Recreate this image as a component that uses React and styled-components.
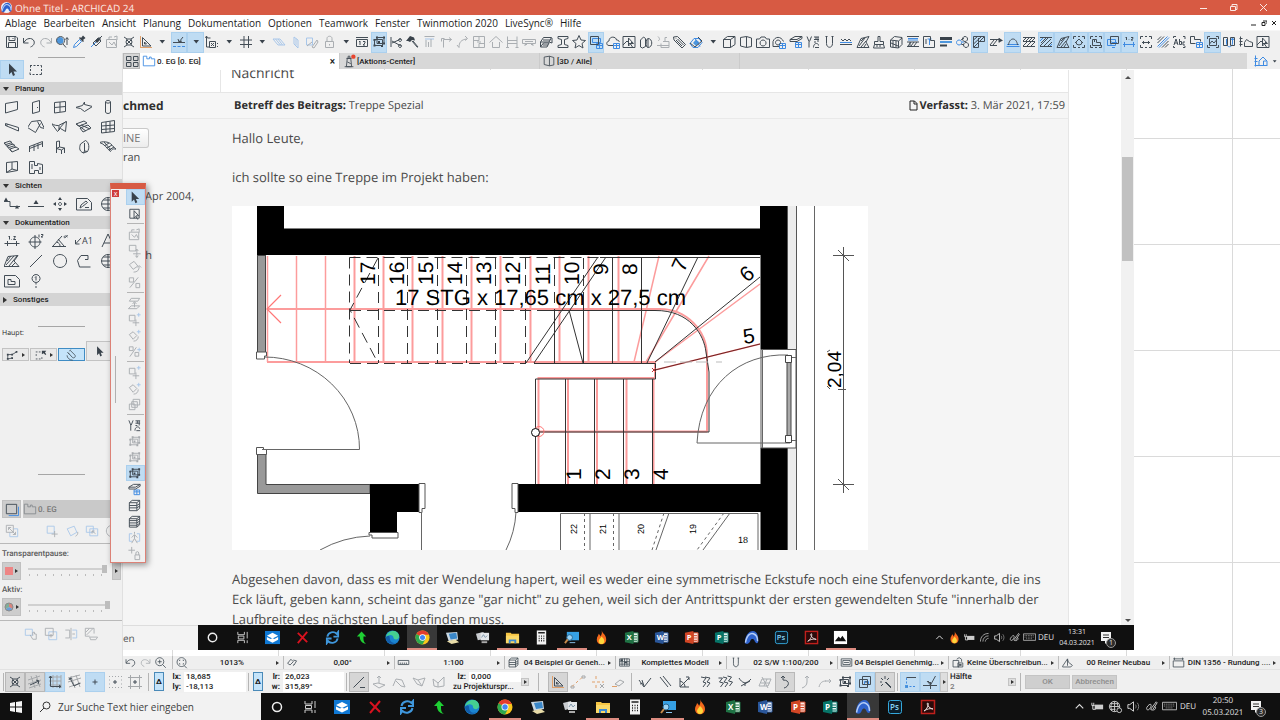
import React from 'react';
import styled, { createGlobalStyle, css } from 'styled-components';

const GlobalStyle = createGlobalStyle`
  * { box-sizing: border-box; }
  html, body, #root { height: 100%; margin: 0; }
  body {
    font-family: 'Open Sans', 'Noto Sans', sans-serif;
    font-size: 9px;
    color: #1c1c1c;
    background: #f0f0f0;
    overflow: hidden;
    text-rendering: geometricPrecision;
  }
  button, input {
    font: inherit;
    color: inherit;
    border: 0;
    padding: 0;
    margin: 0;
    background: none;
    min-width: 0;
  }
`;

// small print of the bars and palettes
const tinyFont = css`
  font-family: Roboto, 'Noto Sans', sans-serif;
  font-size: 8px;
  font-weight: 500;
`;

/* ---------- icons ---------- */
// k = dark stroke, f = dark fill, b = blue stroke, bf = blue fill,
// o = orange stroke, g = grey stroke
const ICONS = {
  save: { k: 'M2.5 2.5h9.5l1.5 1.5v9.5h-11zM5 2.5v4h6v-4M4.5 13.5v-5h7v5M9 4v1' },
  undo: { k: 'M2.5 4v5h5M3 8.5C5 4 11 3 13 7c1 3-1 5-3.500 6' },
  redo: { k: 'M13.500 4v5h-5M13 8.500C11 4 5 3 3 7c-1 3 1 5 3.500 6' },
  pick: { bf: 'M6 3a3.500 3.500 0 1 0 .1 0z', k: 'M6.500 2.500a4 4 0 1 0 .1 0zM9 10l3 3.500M13 4v7M11.500 5.500l1.500-2 1.500 2' },
  pipette: { b: 'M2.500 13.500l1-3 5-5 2 2-5 5z', f: 'M8 4l1-1 1 1 2-2.500 2.500 2.500-2.500 2 1 1-1 1z' },
  syringe: { b: 'M3 13l7-7', k: 'M5 9l3 3 5-5-3-3zM11 5l3-3', f: 'M7 7l2 2 4-4-2-2z' },
  suspend: { k: 'M2.500 5.500v8h10v-8zM5 5V3h3M10 3l3-1v4M5 8l3 3 2-3 2 4' },
  cross: { k: 'M3 3l3 2h4l3-2M3 13l3-2h4l3 2M6 5l-1 3 1 3M10 5l1 3-1 3M6 6l4 4M10 6l-4 4' },
  square: { o: 'M2.500 2v12M2 13.500h12', k: 'M4.500 3.500v8.500h8.500zM6.500 8v2h2z' },
  caret: { f: 'M5.500 6h5.500l-2.700 3.500z' },
  guide: { b: 'M2 12.500h3M6.500 12.500h3M11 12.500h3', k: 'M2 8.500h12M8 8l4-5M7 5l1 3 3-1' },
  xy: { k: 'M2.500 2v11h3M1.500 4l1-2 1 2h3M5.500 7.500h6v6h-6zM7 9l3 3M10 9l-3 3M13.500 9v1M13.500 12v1' },
  hash: { k: 'M6 2v12M10.500 2v12M2 6h12M2 10.500h12' },
  planeA: { b: 'M2 5h7l5 6h-7zM4.500 5l5 6M7 5l4.500 6' },
  planeB: { b: 'M6 3l4 3v8l-4-4zM8 4.500v7' },
  planeC: { b: 'M2.500 4h6v7h-6z', k: 'M8 13l5-7 1 2-4 6zM3 12l5-4' },
  lock: { k: 'M4.500 7.500h8v6h-8zM6 7.500v-3c0-3 5-3 5 0v3M8.500 10v1.500' },
  ruler12: { k: 'M2 3.500h12M2.500 5.500h11v7h-11zM6 7v4M5 8l1-1M9 7.500h2v1.500l-2 2h2' },
  group: { k: 'M3.500 5.500h8v6h-8zM6 3.500h7v6h-7z', f: 'M2.500 10.500h2v2h-2zM5 2.500h2v2h-2zM12 2.500h2v2h-2zM12 8.500h2v2h-2zM7 7h2v2h-2zM2.500 5h2v2h-2zM10 11h2v2h-2z' },
  scissors: { k: 'M3 3v10M4 9l9-4M4 7l9 5M12 4.500a1.500 1.500 0 1 0 .1 0zM12 10.500a1.500 1.500 0 1 0 .1 0z' },
  axe: { k: 'M8 7l5.500 6.500M9 7l5 6', f: 'M2 7l4-5 4 1.500 1 3-3-.5-2 2-2-1z' },
  steps: { b: 'M4 5h9', k: 'M3.500 2.500h10M10 5v8M5 6v7M7.500 8v5' },
  corner: { k: 'M5.500 13.500v-8h8M3.500 7.500v-3h3M11 3.500l2.500 2-2.500 2' },
  bend: { k: 'M5 13.500c0-5 2-8 8-8.500M3 11l2 2.500M11 2l2.500 2.500-2.500 2' },
  split: { k: 'M2.500 2.500h11v11h-11zM8 2.500v4H2.500M8 13.500v-4h5.500M6 8h4' },
  house: { k: 'M1.500 8.500L8 2.500l6.500 6M4.500 8v5.500h7V8' },
  beam: { k: 'M3.500 2.500v11M13 2.500v11M3.500 6.500H13M3.500 9.500H13M2 13.500h3M11.500 13.500h3' },
  truck: { k: 'M1.500 5.500h13v4h-13zM4 12v-1.500h2M12 12v-1.500h-2M4 7.500h8' },
  slabs: { k: 'M2.500 8l3-4.500h8L11 8zM2.500 13l3-4H11L9 13zM2.500 8v5M11 8l3 1v-5M5 6h7M5 11h5' },
  ibeam: { k: 'M3 2.500h10v2l-3.500 1v5l3.500 1v2H3v-2l3.500-1v-5L3 4.500z' },
  star: { k: 'M8 1.500l2 4.500 4.500.5-3.500 3 1 4.500-4-2.500-4 2.500 1-4.500-3.500-3L6 6z' },
  layerSet: { k: 'M2.500 2.500h8v8h-8z', b: 'M4.500 4.500h8v4h-8zM8.500 9.500h6v5h-6zM8.500 11.500h6M11.500 9.500v5' },
  cloudSet: { k: 'M8 11.500H4c-3 0-3-4 0-4.500 0-5 7-5 7.500-1 2 0 3 1 2.500 2', b: 'M8.500 9.500h6v5h-6zM8.500 11.500h6M11.500 9.500v5' },
  picSel: { k: 'M2 2.500h12v11H2zM2 11l4-4 3 3 2-2M7.500 4v8l2-2 2 3M7.500 4l5 5.500h-3' },
  solids: { k: 'M2.500 6l3-3 2 1.500v8l-3 1.500-2-1zM10 4.500c5 0 5 9 0 9-3 0-2-9 0-9zM10 5v8' },
  paint: { k: 'M8 7.500h6v6H6v-4M10 7V3.500h2M3 2.500c2 2 2 4 0 4M2 11.500h12' },
  tag: { k: 'M2.500 3l4-.5 8 8-3.500 3.500-8-8zM5 6l6 6M6.500 5l6 6M5 4.500v.5' },
  eye3d: { b: 'M2 9.500l4-5h5l3 4-4 5H5zM7 4.500l5 8', k: 'M2 9l5 4 7-6M10 3l4 4', bf: 'M8 5.500l3.500 3L8 12l-3-3z' },
  box: { k: 'M2.500 5.500h7v8h-7zM2.500 5.500l4-3h7.500l-4.500 3M14 2.500v8l-4.500 3' },
  box2: { k: 'M2.500 3.500l6-1v11l-6-1.500zM8.500 2.500l5 1.500v8.500l-5 1' },
  camera: { k: 'M1.500 5h3l1.500-2h4l1.500 2h3v8.500h-13zM8 6a3 3 0 1 0 .1 0z' },
  camSet: { k: 'M8 12.500H2v-5C4 2 10 2 12.500 7.500M7 6a2.500 2.500 0 1 0 .1 0z', b: 'M8.500 9.500h6v5h-6zM8.500 11.500h6M11.500 9.500v5' },
  laySet: { k: 'M2 5.500l5-3h7l-5 3zM2 5.500v2h7l5-3v-2', b: 'M7.500 8.500h6v5h-6zM7.500 10.500h6M10.500 8.500v5' },
  penSet: { k: 'M2 2.500l2 5v6M6.500 2.500l-2 5M9 3h5M9 5.500h5M9 8h2M8.500 13.500c0-5 5-5 5-2M10 13.500h4M11 3v3M13 3v5' },
  pen: { k: 'M5.500 2.500v7c0 5 6 5 6 0v-7M4.500 2.500h2M10.500 2.500h2' },
  waves: { k: 'M2 10.500h12M3 5l2 2 2-2 2 2 2-2 2 2', b: 'M2 8.500h12' },
  hatch: { k: 'M2 13.500l4-9 8-2-3 5.500 3 5.500zM4 12l6-8M6 13l5-6M9 13l2-3M6 7l3-3' },
  brush: { k: 'M7 2.500h2v5h3.500v3h-9v-3H7zM3.500 10.500l-1 3.500h11l-1-3.500M6 11v2M9 11v2' },
  cube: { k: 'M2.500 6l4-3.500 7.500 1v7l-3.500 3.500-8-1zM2.500 6l8 1 3.500-3M10.500 7v7M5 6.500v7M8 7v6.500M3 9l7 3' },
  wallHatch: { b: 'M3 4.500h10M3 6h10', k: 'M2 2.500h12M2 8h12M2 12.500h12M3 12l3-4M6 12l3-4M9 12l3-4M5 8v5' },
  planT: { k: 'M2.500 2.500h7v4h4v7h-11zM5 5v5', b: 'M6.500 5h4M8.500 5v6' },
  blocks: { f: 'M2 3h12v3H2zM2 10.500h7v2H2z', bf: 'M2 7h12v2H2z' },
  circles: { b: 'M4 6a2.500 2.500 0 1 0 .1 0zM7 8h2', k: 'M10 2.500a2.500 2.500 0 1 0 .1 0zM11 8.500a2.500 2.500 0 1 0 .1 0zM6 6l3-2M6 10l3 1' },
  hatchCorner: { k: 'M2.500 2.500h11v5h-6v6h-5zM2.500 6l4-3.500M2.500 10l8-7.500M3 13l10-10M7.500 4v4' },
  hatchArrow: { k: 'M2 5.500h9M2 11.500h7M2 11l4-5M5 11l4-5M11 8.500V4', f: 'M11 4l4 2.500-4 2z' },
  roof: { b: 'M1.500 12.500h13M2 10.500h12', k: 'M3.500 11c1-8 8-8 9 0' },
  wall: { k: 'M2 3.500h12M2 7.500h12M2 12.500h12M2 7l3-3M5 7l3-3M8 7l3-3M11 7l3-3M2 12l4-4M6 12l4-4M10 12l4-4' },
  wallBlue: { k: 'M2 3.500h12M2 12.500h12M3 9l5-5M2 12l8-8M6 12l7-7M10 12l4-4', b: 'M2 7l3-3M12 12l2-2' },
  frameCircle: { k: 'M2.500 5V2.500H5M11 2.500h2.500V5M13.500 11v2.500H11M5 13.500H2.500V11M7 2.500h2M7 13.500h2M4 9l4-4 4 4M5 8a3 3 0 1 0 6 0' },
  frameBox: { k: 'M2.500 5V2.500H5M11 2.500h2.500V5M13.500 11v2.500H11M5 13.500H2.500V11M7 2.500h2M7 13.500h2M4.500 11.500v-6h4v3h4v3zM6.500 6v2' },
  overlap: { k: 'M5.500 2.500h8v7h-8z', b: 'M2.500 5.500h8v6h-8zM7 8.500h5M7 13.500h3M6 7v4' },
  dims: { b: 'M2 10.500h12M3.500 8v5M12.500 8v5', k: 'M5.500 3v3M4.500 4l1-1M8 5.500v.5M10 3.500h2v1l-2 1.500h2' },
  frameDim: { k: 'M2.500 5V2.500H5M11 2.500h2.500V5M13.500 11v2.500H11M5 13.500H2.500V11M7 2.500h2M7 13.500h2M4 8.500h8M5.500 7v3M10.500 7v3' },
  hatchBlue: { k: 'M2.500 6l3.500-3.500M2.500 9l6.500-6.500M7 13.500l6.500-6.500M10 13.500l3.500-3.500', b: 'M2.500 12.500l10-10M4 13.500l10-10' },
  abc: { k: 'M2.500 4V2.500H5M12 2.500h2V5M14 12v1.500h-2M4 13.500H2.500V12M3 11l2-6 2 6M3.500 9h3M8.500 5v5.500h2v-3h-2M14 8h-2v3h2' },
  planSet: { k: 'M2.500 2.500h4v3h6v2M2.500 2.500v7h5', b: 'M8.500 8.500h6v5h-6zM8.500 10.500h6M11.500 8.500v5' },
  framePic: { k: 'M2.500 5V2.500H5M11 2.500h2.500V5M13.500 11v2.500H11M5 13.500H2.500V11M4.500 4.500h7v7h-7zM4.500 10l2.500-3 2 2 2.500-3' },
  magnetU: { k: 'M2.500 3.500h4v8h-4zM9.500 3.500h4v8h-4z', b: 'M5.500 5v4c0 5 6 5 6 0V4M10 6l1.500-2 1.500 2' },
  elev: { k: 'M2.500 2.500v10M1.500 4.500h3M1.500 7.500h3M1.500 10.500h3M6.500 12.500v-4l2-3 3 2 3 1v4z' },
  elevBlue: { b: 'M2.500 2.500v11M1.500 5.500h3M1.500 8.500h3M1.500 12.500h13M6 12V8l4-4 4 4v4M10.500 12V8h3' },

  /* toolbox */
  arrow: { f: 'M5 1.500v11l2.500-2.500 1.500 4 2-1-1.500-3.500h3.500z' },
  marquee: { k: 'M2 3.500h2M5.500 3.500h2M9 3.500h2M12.500 3.500h1v2M13.500 7v2M13.500 10.500v2h-2M10 12.500H8M6.500 12.500h-2M3 12.500h-1v-2M2.500 9V7M2.500 5.500V4' },
  tWall: { k: 'M1.500 4.500l12-2v8l-12 3.500z' },
  tDoor: { k: 'M4.500 3.500l7-2v11l-7 2zM9.500 8v1' },
  tWindow: { k: 'M2.500 3.500l11-1v10l-11 1.500zM8 3v10M2.500 8.500l11-1' },
  tSlab: { k: 'M-0.500 8.500l7-2 2-3.500v2.500l8 2-8 5-4-3z' },
  tColumn: { k: 'M5.500 3c0-2 5-2 5 0v10c0 2-5 2-5 0zM5.500 3c0 1.500 5 1.500 5 0' },
  tBeam: { k: 'M1.500 4.500l13 4v3.500l-13-5.500zM1.500 6.500l3-1' },
  tRoof: { k: 'M-0.500 8.500l4-6 9-1 4 8-4-1-3-6M-0.500 8.500l8 5 5-9' },
  tShell: { k: 'M-0.500 4.500c3 2 5 2 7 2l8-4-1 10-5-3-3 3zM7 6.500v4M13.500 2.500l-7 8' },
  tSky: { k: 'M0 5l8-3 3 2-8 3zM4 9l8-3 3 3-8 4zM0 5l10 7M5 6l9 4' },
  tCurtain: { k: 'M1.500 3.500l13-2v11l-13 1.500zM6 3v10.500M10 2.500v10.500M1.500 7l13-1M1.500 10.500l13-1' },
  tStair: { k: 'M0 4l6-2 2 1.500-6 2zM3 7l6-2 2 1.500-6 2zM6 10l6-2 3 2-7 3zM0 4l8 9M8 4v2M11 7v2' },
  tRail: { k: 'M1.500 7.500l13-5M1.500 9.500l13-5M1.500 7v6M6 6v6M10 4.500V10M14.500 2.500V8' },
  tChair: { k: 'M4.500 2.500l3-.5v6l5 1v5M4.500 2.500V14M4.500 9.500l5 1.500 3-2M9.500 11v4M7.500 8l-3 1.500' },
  tMorph: { k: 'M4.500 5l5-3.500c4 2 4 8 2 11l-4 1.500c-5-2-4-6-3-9zM8.500 4v8l3 .5M8.500 12l-1 2' },
  tMesh: { k: 'M-0.500 3.500c3-1 5-1 9 0 3 1 4 4 8 7-3-1-4-1-6 2C6 9 5 5-.5 3.500zM4 3l7 8M9 4L5 6.500M12 6L7 9M14 8l-5 3' },
  tZone: { k: 'M2.500 3.500l11-1v9l-11 2zM8 3v7l5.500 1.500M8 10l-5.500 3.500' },
  tZone2: { k: 'M1.500 2.500h5v4h3v-2l5 1v9h-4v-3h-4v3h-5zM4 5v5M12 8v3' },
  tSection: { k: 'M0 5.500h6v5h10', f: 'M0 5l2-3.500L4 5zM11 12.500L13 9l2 3.500z' },
  tElev: { k: 'M0 10.500h16', f: 'M5.500 8L8 4l2.500 4z' },
  tInt: { k: 'M8 6.500a1.500 1.500 0 1 0 .1 0z', f: 'M6 4l2-3 2 3zM6 12l2 3 2-3zM4 6L1 8l3 2zM12 6l3 2-3 2z' },
  tSheet: { k: 'M0.500 2.500h11l4 4v7.500h-15zM4 12l1-3 5-4 1.500 1.500-5 4zM9 11.500h4' },
  tGlobe: { k: 'M8 1.500a6.500 6.500 0 1 0 .1 0zM8 1.500v13M1.500 8h13M3 4h10M3 12h10' },
  tDim: { k: 'M0.500 10.500h15M3.500 8v5M12.500 8v5M5.500 3v3.500M4.500 4l1-1M7.500 6v.5M9.500 3.500h2l-2 3h2.500' },
  tLevel: { k: 'M7 4a5 5 0 1 0 .1 0zM7 2v14M0.500 9h13M11 1.500v3M13 1.500h2v1l-2 1.500h2' },
  tAngle: { k: 'M0 13.500h14M1 13L10 3M4.500 9c3 1 3.500 2.500 3.500 4M6 6l6 7M15.500 2c-4 7-5-2 0 2' },
  tText: { k: 'M2 14L8 1l6 13M4 10h8' },
  tFill: { k: 'M0 13.500l4-10 10-1-4 5.500 5 5.500zM2 12l8-9M5 13l8-10M8 13l3-3M3 8l4-5' },
  tLine: { k: 'M2 14L14 2' },
  tCircle: { k: 'M8 1.500a6.500 6.500 0 1 0 .1 0z' },
  tPoly: { k: 'M12 2.500H5l-3.500 5 2 6.500h11M12 2.500v4H9' },
  tDrawing: { k: 'M0.500 2.500h11l4 4v7.500h-15zM4 11.500v-5h3v2h4v3z' },
  tChange: { k: 'M8 1.500a4 4 0 1 0 .1 0zM8 3.500v4M7 4.500l1-1M8 10v1.500M8 13v2' },

  /* palette and navigator */
  polySel: { k: 'M3 3.500h10v9.500H3zM7.500 5v8l2-2 2 3.500M7.500 5l5 5.500h-3' },
  move: { k: 'M2.500 2.500h7v6h-7zM10.500 7v8M6.500 11.500h8M9 8.500l1.500-2 1.500 2M9 13.500l1.500 2 1.500-2' },
  rotate: { k: 'M2.500 6l5-3.500 4 5-5 3.500zM7 14c4 0 6-2 6-6M13 7l-2 2M13 7l2 2' },
  mirror: { k: 'M2.500 3h4.500v4.500H2.500zM3 13.500l9-11M9.500 9h4v4.500h-4z' },
  elevate: { k: 'M4.500 2.500h9l-2 3h-9zM1.500 13.500h9l3-3h-9zM8 12V7M6 8.500L8 6l2 2.500' },
  moveCopy: { k: 'M2.500 3.500h6v6h-6zM9.500 8v7M6 11.500h7', b: 'M12.500 1v4M10.500 3h4' },
  rotateCopy: { k: 'M2.500 7l4-3 4 4-4 4zM7 14c3 0 5-2 5-5', b: 'M12.500 2v4M10.500 4h4' },
  mirrorCopy: { k: 'M2.500 3h4v4h-4zM3 13.500l7-10M8.500 9h4v4h-4z', b: 'M13 4v4M11 6h4' },
  multi: { k: 'M6.500 2.500h7v6h-7zM2.500 7.500h6v6h-6zM5 5h6v6h-6z' },
  layers: { k: 'M2.500 5l3-2.500h8l-3 2.500zM2.500 5v8.500h8V5M2.500 8h8l3-2M2.500 10.500h8l3-2M10.500 13.500l3-2.500V2.500' },
  layersDark: { k: 'M2.500 5l3-2.500h8l-3 2.500zM2.500 5v9h8V5M2.500 7h8l3-2M2.500 9.500h8l3-2M2.500 12h8l3-2M13.500 2.500v9l-3 2.500' },
  person: { b: 'M2.500 4h3M10.500 4h3v8h-3M5.500 12h-3V4', k: 'M8 2v2M8 5v4l-3 5M8 9l3 5M5 8l3-3 3 3' },
  wandLock: { k: 'M5 1v7M1.500 4.500h7M8.500 9.500h5v5h-5zM9.500 9.500V7.500c0-2 3-2 3 0v2' },
  folder: { k: 'M1.500 13.500v-11h4v3h3v-2h2v2h4v8z' },
  folderBlue: { b: 'M1.500 13.500v-11h4v3h3v-2h2v2h4v8z' },
  views: { k: 'M2.500 2.500h11v10h-11z', b: 'M5 14.500h10.500V5' },
  swap: { k: 'M1.500 1.500h8v8h-8zM4 4l8 8M4 7V4h3M12 9v3H9', b: 'M10 5.500h4.500v9h-9V10' },
  nMove: { b: 'M2.500 2.500h8v8h-8z', k: 'M11 8v7M7.500 11.500h7' },
  nRotate: { b: 'M2.500 5.500l8-3 3 7-7 4z', k: 'M12 14c2-1 3-3 2.500-5' },
  nCopy: { b: 'M1.500 2.500h8v7h-8zM5.500 5.500h9v8h-9z', k: 'M8 8l4 3M8 11V8h3' },
  nHand: { b: 'M1.500 2.500h8v7h-8z', k: 'M7 9l3 5h4V8h-2V6h-2v4' },
  nOver: { b: 'M5.500 5.500h9v9h-9z', k: 'M1.500 1.500h9v8h-9zM8 8v4M6 10h4' },
  nMirror: { k: 'M1.500 3.500h5v9h-5M8 1v14M9.500 8h3', b: 'M9.500 3.500h5v9h-5' },
  nHatch: { k: 'M1.500 1.500h10v6M1.500 1.500v9h5M3 9l7-7M2 6l4-4M6.500 11.500h9l-2 3h-6z' },
  magnet: { k: 'M4 6l5 5.500c2 2 5-1 3-3L6.500 3M3 5l2.500 3M7 2L5.500 4M2.500 9c0 3 3 6 7 6' },
  polyline: { k: 'M2 12.500V7.500h5l5-3M2 12.500l5-1', f: 'M1 6.500h2v2H1zM6 6.500h2v2H6zM11 3.500h2v2h-2zM1 11.500h2v2H1zM6 10.500h2v2H6z' },
  marqueeArrow: { k: 'M2 4.500h2M5.500 4.500h2M2.500 7v2M2 12.500h2M5.500 12.500h2M9 12.500v-2', f: 'M9 3h5l-1.500 2 1.500 2-1 1-2-2-2 1z' },
  overview: { k: 'M2.500 3.500h4.500v4H2.500zM9.500 3.500h4.500v4H9.500zM2.500 9.500h4.500v4H2.500zM9.500 9.500h4.500v4H9.500z' },

  /* option and coordinate bars */
  zoomIn: { k: 'M7 2a5 5 0 1 0 .1 0zM11 11l3.500 3.500M7 4.500v5M4.500 7h5' },
  zoomFit: { k: 'M8 2a5.500 5.500 0 1 0 .1 0zM11.500 12l3 3M5.500 6V5h1M9.500 5h1v1M5.500 9v1h1M10.500 9v1h-1' },
  orient: { k: 'M2 9l4-5 3 3-4 4zM9 5l4 1-3 5M9 12l1-2' },
  scale: { k: 'M1.500 5.500h13v5h-13zM4 8v2M6.500 8v2M9 8v2M11.500 8v2' },
  model: { k: 'M2 3.500h12v9H2zM2 7h12M2 10h12M5 3v9M8 3v9M11 3v9', f: 'M3 4h3v2H3zM8 7h3v2H8z' },
  monitor: { k: 'M1.500 3.500h13v9h-13zM3.500 5.500h9v5h-9zM5 8h6' },
  override: { k: 'M2.500 5.500h7v8h-7zM7 4l3-2 3 2v3M8.500 8.500h6v5h-6z', f: 'M10 10h3v2h-3z' },
  reno: { k: 'M2 12.500l6-9 1 4 5 4-2 2H2zM8 4v8' },
  dimStd: { k: 'M1.500 3.500h13M1.500 6v7.500h13V6zM3 2v3M13 2v3' },
  gridSkew: { g: 'M1 6l12-4M1 10l13-4M2 14l12-4M4 2l4 12M9 1l4 12', k: 'M3 11l9-4M9 6l3 1-1 3' },
  gridAxis: { g: 'M2 3h12M2 7h12M2 11h12M6 1v13M10 1v13M14 1v13', k: 'M3.500 2v10.500H14M2 4l1.500-2L5 4M12 11l2 1.500-2 1.500' },
  gridTurn: { g: 'M1 4l12-3M1 8l13-4M2 13l12-4M4 2l4 12M9 1l4 12', k: 'M3 4l4 8 6-3M2 6l1-2 2 1' },
  snapPoint: { k: 'M8 5.500v5M5.500 8h5' },
  gridDots: { g: 'M2 2.500h1M5 2.500h1M8 2.500h1M11 2.500h1M14 2.500h1M2 6h1M14 6h1M2 10h1M14 10h1M2 13.500h1M5 13.500h1M8 13.500h1M11 13.500h1M14 13.500h1', k: 'M8 6v4M6 8h4' },
  gridLines: { g: 'M3.500 1v14M12.500 1v14M1 3.500h14M1 12.500h14', k: 'M8 6v4M6 8h4' },
  slope: { k: 'M2.500 13.500L13 3M9 13.500h5' },
  surf: { k: 'M2 10l5-1 7 2-6 3zM8 9V2M6 4l2-2 2 2' },
  surf2: { k: 'M2 12l3-7 6 1 3 7-4-1-5-5' },
  surf3: { k: 'M2 4l5 2 7-2-3 8-5-2zM7 6l4 6' },
  surf4: { k: 'M2 5l5 4 6-6v9l-6 1-4-1zM7 9v4' },
  dashLine: { o: 'M2 12.500l2-2M6 9l2-2M10 5.500l2-2', g: 'M1 12h3v2H1zM12 2h3v2h-3z' },
  dashCross: { o: 'M2 8h3M7 8h3M12 8h2M6 2v3M6 11v3', g: 'M10 10l4 4M14 10l-4 4' },
  eraser: { o: 'M2 12.500h5', g: 'M5 10l5-4 4 2-5 4z' },
  perp: { k: 'M2 6l5 7M7 13l7-9M3 10l3-1M5 6l2 6' },
  parallel: { k: 'M3 3l8 10M6 2l8 10' },
  bisect: { k: 'M3 13V4M3 13h9M3 13l9-9M3 7c3 1 5 3 5 6M9 3h3v3' },
  offset: { k: 'M4 3l5 1-3 4 3 1-3 4M8 3l5 1-3 4 3 1-3 4' },
  offset2: { k: 'M1.500 4h4l-3 4 4 1-3 4M6 3l4 1-3 4 4 1-3 4M10.500 2l4 1-3 4 4 1-3 4' },
  tangent: { k: 'M2 4c3 5 7 7 12 1M4 12l9-5M8 9v3' },
  gridPlane: { k: 'M2 12l3-7h9l-3 7zM4 9h9M7 12l3-7M5 3l6 11' },
  curveL: { k: 'M6 2v4c8 0 6 7 1 8M4 4l2-2 2 2' },
  curveR: { k: 'M10 2v6c0 3-2 5-5 6M8 4l2-2 2 2' },
  arcR: { k: 'M2 13c1-4 3-6 7-6M8 7h6M12 5l2 2-2 2' },
  overlap2: { k: 'M5.500 2.500h8v8h-8zM2.500 5.500h8v8h-8zM8 8h3', b: 'M7.500 7.500h4v3h-4z' },
  wand: { k: 'M8 8l6 6M9 8l5 5M8 2v3M3 8h2M4 4l2 2M12 4l-2 2M4 12l2-2' },
  snapMid: { b: 'M4 12.500h2M7.500 12.500h2M11 12.500h2M4.500 4v2M4.500 7.500v2', k: 'M4.500 3.500H14', bf: 'M3 11h3v3H3z' },
  snapCheck: { k: 'M1 11.500h14M5 7l3.500 4 5-9M8.500 8v7M6 7l3 3' },
};

const TOWER = 'M5 14.500L6 5h4l1 9.500zM5 5h6M7 5V2.500h2V5M3 14.500h10M6 9l4 2';

function Icon({ name, size = 16 }) {
  const i = ICONS[name] || {};
  return (
    <svg width={size} height={size} viewBox="0 0 16 16" fill="none" aria-hidden="true">
      {i.g && <path d={i.g} stroke="#a5a8ab" />}
      {i.bf && <path d={i.bf} fill="#4d96dc" />}
      {i.b && <path d={i.b} stroke="#3f8be2" />}
      {i.o && <path d={i.o} stroke="#e0a06a" />}
      {i.f && <path d={i.f} fill="#39424b" />}
      {i.k && <path d={i.k} stroke="#434d56" />}
    </svg>
  );
}

/* ---------- window frame ---------- */
const Window = styled.div`
  display: flex;
  flex-direction: column;
  height: 100%;
`;

const TitleBar = styled.header`
  display: flex;
  align-items: center;
  height: 15px;
  padding: 0 12px 0 1px;
  gap: 3px;
  background: #d75a43;
  color: #fbe9e4;
  font-size: 10px;
  .title {
    flex: 1;
  }
  .controls {
    display: flex;
    gap: 21px;
  }
  button {
    display: flex;
  }
`;

const MenuBar = styled.nav`
  display: flex;
  align-items: center;
  height: 15px;
  padding: 0 3px 0 5px;
  gap: 7px;
  background: #fff;
  font-size: 10px;
  button {
    white-space: nowrap;
  }
  .mdi {
    display: flex;
    gap: 4px;
    margin-left: auto;
  }
`;

const MENUS = ['Ablage', 'Bearbeiten', 'Ansicht', 'Planung', 'Dokumentation', 'Optionen', 'Teamwork', 'Fenster', 'Twinmotion 2020', 'LiveSync®', 'Hilfe'];

const ToolBar = styled.div`
  display: flex;
  align-items: center;
  height: 23px;
  padding: 0 9px 0 4px;
  background: #f0f0f0;
  border-top: 1px solid #f7f7f7;
`;

const ToolButton = styled.button`
  display: flex;
  flex: ${props => (props.$width ? `0 0 ${props.$width}px` : '1 1 0')};
  align-items: center;
  justify-content: center;
  height: ${props => props.$height || 21}px;
  svg {
    flex: none;
    opacity: ${props => (props.$faded ? 0.4 : 1)};
  }
  ${props =>
    props.$on &&
    css`
      background: #bfdcf3;
      box-shadow: inset 0 0 0 1px #abd0ee;
    `}
  ${props =>
    props.$pressed &&
    css`
      background: #d6d6d6;
      box-shadow: inset 0 0 0 1px #b8b8b8;
    `}
`;

// "*" marks an active tool, "-" a disabled one, "#" a pressed one
const TOOLBAR = `save undo redo- pick pipette syringe suspend- cross square caret guide* caret* xy caret hash caret
  planeA- planeB- planeC- lock- caret ruler12 group* scissors axe steps- corner- bend- split- house- beam- truck-
  slabs ibeam star layerSet* cloudSet picSel solids paint- tag eye3d caret box box2 camera camSet laySet penSet pen
  waves hatch brush cube wallHatch planT blocks circles hatchCorner* hatchArrow roof* wall wallBlue* hatch*
  frameCircle* frameBox* overlap* dims* frameDim hatchBlue abc planSet framePic* magnetU elev picSel`.split(/\s+/);

function Tool({ spec, size, width, height }) {
  const name = spec.replace(/[*\-#]/g, '');
  return (
    <ToolButton
      aria-label={name}
      $on={spec.includes('*')}
      $faded={spec.includes('-')}
      $pressed={spec.includes('#')}
      $width={width}
      $height={height}
    >
      <Icon name={name} size={size} />
    </ToolButton>
  );
}

const Body = styled.div`
  display: flex;
  flex: 1;
  min-height: 0;
  position: relative;
`;

/* ---------- toolbox ---------- */
const Side = styled.aside`
  display: flex;
  flex-direction: column;
  flex: 0 0 123px;
  background: #f0f0f0;
  border-right: 1px solid #e0e0e0;
  overflow: hidden;
`;

const Handle = styled.div`
  flex: none;
  width: 47px;
  height: 1px;
  margin: ${props => props.$top}px auto 2px 38px;
  background: #a6a6a6;
`;

const SideHead = styled.button`
  display: flex;
  flex: none;
  align-items: center;
  width: 100%;
  height: 13px;
  padding-left: 3px;
  gap: 6px;
  background: #d4d4d4;
  ${tinyFont}
`;

const Chevron = styled.span`
  width: 0;
  height: 0;
  border: ${props => (props.$small ? 2 : 3)}px solid transparent;
  ${props =>
    props.$right
      ? css`
          border-left: ${props.$small ? 3 : 4}px solid #333;
          border-right-width: 0;
        `
      : css`
          border-top: 4px solid #333;
          border-bottom-width: 0;
        `}
`;

const ToolGrid = styled.div`
  display: grid;
  flex: none;
  grid-template-columns: repeat(5, 24px);
  grid-auto-rows: 20px;
  padding: 2px 0;
  button {
    height: 20px;
  }
`;

const ArrowRow = styled.div`
  display: flex;
  flex: none;
  height: 22px;
`;

const MainOptions = styled.div`
  flex: none;
  height: 145px;
  padding-left: 2px;
  font-size: 7px;
  .row {
    display: flex;
    align-items: flex-end;
    gap: 1px;
    margin-top: 3px;
  }
`;

const DropButton = styled.button`
  display: flex;
  align-items: center;
  width: 27px;
  height: ${props => props.$height || 13}px;
  padding: 0 3px;
  border: 1px solid ${props => (props.$on ? '#3f8cc4' : '#c3c3c3')};
  background: ${props => (props.$on ? '#c5e4fa' : '#e9e9e9')};
  justify-content: ${props => (props.$on || props.$height ? 'center' : 'space-between')};
`;

const Navigator = styled.div`
  flex: none;
  display: flex;
  flex-direction: column;
  .story {
    display: flex;
    height: 18px;
    gap: 2px;
    padding-left: 2px;
    margin-top: 23px;
    color: #777;
    ${tinyFont}
  }
  .name {
    display: flex;
    align-items: center;
    flex: 1;
    gap: 1px;
    background: #c9c9c9;
  }
  .name svg {
    opacity: 0.5;
  }
`;

const NavIcons = styled.div`
  display: flex;
  align-items: center;
  height: 26px;
  padding-left: ${props => (props.$bottom ? 23 : 3)}px;
  gap: ${props => (props.$bottom ? 4 : 2)}px;
  border-bottom: ${props => (props.$bottom ? 0 : '1px solid #b9b9b9')};
  button:first-child {
    margin-right: ${props => (props.$bottom ? 0 : 20)}px;
  }
`;

const SliderBlock = styled.div`
  padding: 3px 1px 0 2px;
  color: #5a5a5a;
  ${tinyFont}
  label {
    display: block;
    line-height: 14px;
  }
  .row {
    display: flex;
    align-items: flex-start;
    gap: 5px;
    margin-top: 1px;
  }
`;

const Range = styled.input`
  appearance: none;
  display: block;
  width: 84px;
  height: 14px;
  background:
    linear-gradient(#d0d0d0, #d0d0d0) 2px 6px / 78px 2px no-repeat,
    repeating-linear-gradient(90deg, #bbb 0 1px, transparent 1px 8px) 3px 12px / 76px 2px no-repeat;
  &::-webkit-slider-thumb {
    appearance: none;
    width: 5px;
    height: 8px;
    background: #bdbdbd;
  }
`;

const Swatch = styled.button`
  display: flex;
  align-items: center;
  justify-content: space-evenly;
  flex: 0 0 ${props => props.$width || 19}px;
  height: 18px;
  background: #cdcdcd;
  border: 1px solid #c0c0c0;
`;

const RedPatch = styled.span`
  width: 8px;
  height: 8px;
  background: #ee8585;
`;

const Divider = styled.div`
  height: 1px;
  margin-top: 4px;
  background: #b9b9b9;
`;

const ModelPie = () => (
  <svg width="10" height="10" viewBox="0 0 10 10">
    <path d="M5 5L5 1A4 4 0 0 1 8.500 7z" fill="#d8837c" />
    <path d="M5 5L8.500 7A4 4 0 0 1 1.500 7z" fill="#6d9fd6" />
    <path d="M5 5L1.500 7A4 4 0 0 1 5 1z" fill="#7fae9a" />
    <circle cx="5" cy="5" r="4" fill="none" stroke="#8a8a8a" />
  </svg>
);

const gridTools = list => list.split(' ').map(t => <Tool key={t} spec={t} />);

function Toolbox() {
  return (
    <Side>
      <Handle $top={4} />
      <ArrowRow>
        <Tool spec="arrow*" width={24} height={19} />
        <Tool spec="marquee" width={24} height={19} />
      </ArrowRow>
      <SideHead><Chevron />Planung</SideHead>
      <ToolGrid>
        {gridTools('tWall tDoor tWindow tSlab tColumn tBeam tRoof tShell tSky tCurtain tStair tRail tChair tMorph tMesh tZone tZone2')}
      </ToolGrid>
      <SideHead><Chevron />Sichten</SideHead>
      <ToolGrid>{gridTools('tSection tElev tInt tSheet tGlobe')}</ToolGrid>
      <SideHead><Chevron />Dokumentation</SideHead>
      <ToolGrid>
        {gridTools('tDim tLevel tAngle')}
        <ToolButton aria-label="Etikett">
          <svg width="20" height="16" viewBox="0 0 20 16">
            <path d="M7 5L1.500 11M1.500 7v4h4" fill="none" stroke="#434d56" />
            <text x="8" y="11" fontSize="9" fill="#39424b">A1</text>
          </svg>
        </ToolButton>
        {gridTools('tText tFill tLine tCircle tPoly tGlobe tDrawing tChange')}
      </ToolGrid>
      <SideHead><Chevron $right />Sonstiges</SideHead>
      <Handle $top={20} />
      <MainOptions>
        <div>Haupt:</div>
        <div className="row">
          <DropButton aria-label="Geometrie"><Icon name="polyline" size={14} /><Chevron $right $small /></DropButton>
          <DropButton aria-label="Auswahl"><Icon name="marqueeArrow" size={14} /><Chevron $right $small /></DropButton>
          <DropButton aria-label="Magnet" $on><Icon name="magnet" size={13} /></DropButton>
          <DropButton aria-label="Pfeil" $height={20}><Icon name="arrow" size={13} /></DropButton>
        </div>
      </MainOptions>
      <Handle $top={0} />
      <Navigator>
        <div className="story">
          <Swatch aria-label="Ansichten"><Icon name="views" size={15} /></Swatch>
          <div className="name"><Icon name="folder" size={14} />0. EG</div>
        </div>
        <NavIcons>
          {'swap- nMove- nRotate- nCopy- tCircle-'.split(' ').map(t => <Tool key={t} spec={t} width={18} size={14} />)}
        </NavIcons>
        <SliderBlock>
          <label htmlFor="trace">Transparentpause:</label>
          <div className="row">
            <Swatch aria-label="Farbe"><RedPatch /><Chevron $right $small /></Swatch>
            <Range id="trace" type="range" defaultValue="100" />
            <Swatch aria-label="Mehr" $width={9}><Chevron $right $small /></Swatch>
          </div>
        </SliderBlock>
        <SliderBlock>
          <label htmlFor="active">Aktiv:</label>
          <div className="row">
            <Swatch aria-label="Modellfarbe"><ModelPie /><Chevron $right $small /></Swatch>
            <Range id="active" type="range" defaultValue="100" />
          </div>
        </SliderBlock>
        <Divider />
        <NavIcons $bottom>
          {'nHand- nOver- nMirror- nHatch-'.split(' ').map(t => <Tool key={t} spec={t} width={16} size={14} />)}
        </NavIcons>
      </Navigator>
    </Side>
  );
}

/* ---------- floating palette ---------- */
const Palette = styled.div`
  position: absolute;
  left: 110px;
  top: 130px;
  width: 36px;
  padding-bottom: 1px;
  background: #f0f0f0;
  border: 1px solid #dc8176;
  border-top: 6px solid #d75a43;
  box-shadow: 2px 2px 6px rgba(0, 0, 0, 0.4);
  display: flex;
  justify-content: space-between;
  .close {
    display: block;
    width: 7px;
    height: 7px;
    margin: 1px 0 159px 1px;
    background: #cf3c3c;
    color: #fff;
    font-size: 7px;
    line-height: 6px;
  }
  .grip {
    width: 1px;
    height: 47px;
    margin-left: 4px;
    background: #b0b0b0;
  }
  .tools {
    display: flex;
    flex-direction: column;
    width: 19px;
    button {
      flex: 0 0 16px;
      padding-right: 2px;
    }
  }
  hr {
    width: 17px;
    height: 1px;
    margin: 2px 1px;
    border: 0;
    background: #b5b5b5;
  }
`;

const PALETTE = `arrow* polySel | suspend- move- rotate- mirror- | elevate- moveCopy- rotateCopy- mirrorCopy- |
  moveCopy- rotateCopy- multi- | penSet group- group- group* laySet layers layersDark person- wandLock-`.split(/\s+/);

function FloatingPalette() {
  return (
    <Palette>
      <div>
        <button className="close" aria-label="Schließen">x</button>
        <div className="grip" />
      </div>
      <div className="tools">
        {PALETTE.map((p, i) => (p === '|' ? <hr key={i} /> : <Tool key={i} spec={p} size={15} />))}
      </div>
    </Palette>
  );
}

/* ---------- tabs and canvas ---------- */
const Work = styled.main`
  display: flex;
  flex-direction: column;
  flex: 1;
  min-width: 0;
`;

const TabBar = styled.div`
  display: flex;
  flex: 0 0 16px;
  background: #d8d8d8;
  ${tinyFont}
  .end {
    display: flex;
    align-items: center;
    margin-left: auto;
    background: #f0f0f0;
    padding-left: 6px;
  }
`;

const Tab = styled.button`
  display: flex;
  align-items: center;
  gap: 1px;
  flex: 0 0 200px;
  padding: 0 4px 0 2px;
  background: ${props => (props.$active ? '#fff' : '#d8d8d8')};
  border-right: 1px solid #cbcbcb;
  .close {
    margin-left: auto;
    font-size: 10px;
  }
`;

const Canvas = styled.div`
  display: flex;
  flex: 1;
  min-height: 0;
  padding: 1px 146px 6px 0;
  background-color: #fff;
  background-image: linear-gradient(90deg, #dadada 1px, transparent 1px), linear-gradient(#dadada 1px, transparent 1px);
  background-size: 106px 106px;
  background-position: 49px 69px;
`;

const Shot = styled.section`
  display: flex;
  flex-direction: column;
  flex: 1;
  min-width: 0;
  overflow: hidden;
  background: #fff;
`;

const Page = styled.div`
  display: flex;
  flex: 1;
  min-height: 0;
  overflow: hidden;
  color: #4a4a4a;
  font-size: 13px;
`;

const Forum = styled.div`
  display: flex;
  flex-direction: column;
  flex: 1;
  overflow: hidden;
  border-right: 1px solid #e6e6e6;
`;

const ForumHead = styled.div`
  display: flex;
  flex: 0 0 23px;
  border-bottom: 1px solid #e6e6e6;
  .author {
    flex: 0 0 98px;
    border-right: 1px solid #e6e6e6;
  }
  .message {
    padding-left: 10px;
    line-height: 7px;
    font-size: 14px;
  }
`;

const PostHead = styled.div`
  display: flex;
  flex: 0 0 26px;
  align-items: center;
  padding-right: 3px;
  background: #f6f6f6;
  border-bottom: 1px solid #e9e9e9;
  font-size: 11px;
  b {
    color: #2f2f2f;
  }
  .author {
    flex: 0 0 111px;
    font-size: 12px;
  }
  .date {
    display: flex;
    align-items: center;
    margin-left: auto;
  }
`;

const Post = styled.div`
  display: flex;
  flex: 1;
  min-height: 0;
  background: #f5f5f5;
`;

const Author = styled.div`
  flex: 0 0 109px;
  font-size: 11px;
  line-height: 20px;
  white-space: nowrap;
  button {
    display: block;
    width: 26px;
    height: 20px;
    margin-top: 9px;
    text-align: left;
    line-height: 18px;
    background: linear-gradient(#fff, #ececec);
    border: 1px solid #c9c9c9;
    border-left: 0;
    border-radius: 0 3px 3px 0;
    color: #777;
  }
  .joined {
    margin: 19px 0 39px 22px;
  }
  .place {
    margin-left: 17px;
  }
`;

const Message = styled.article`
  width: 820px;
  line-height: 20px;
  p {
    margin: 0;
    padding-top: 9px;
    padding-bottom: 10px;
  }
  .text {
    padding-top: 19px;
  }
  svg {
    display: block;
    margin-top: 9px;
  }
`;

const ScrollBar = styled.div`
  flex: 0 0 13px;
  margin-left: 52px;
  display: flex;
  flex-direction: column;
  align-items: center;
  background: #f1f1f1;
  .up,
  .down {
    width: 0;
    height: 0;
    border: 3px solid transparent;
  }
  .up {
    margin-top: 3px;
    border-bottom-color: #505050;
  }
  .thumb {
    width: 11px;
    height: 104px;
    margin-top: 78px;
    background: #c1c1c1;
  }
  .down {
    margin-top: auto;
    border-top-color: #505050;
  }
`;

/* ---------- stair plan ---------- */
const RED_RISERS = [267, 296, 325, 354, 383, 412, 442, 471, 500, 530, 559, 588, 618];
const DASHED_RISERS = [378, 407, 437, 466, 495, 525, 554];
const STEP_LABELS = [['17', 375], ['16', 404], ['15', 433], ['14', 462], ['13', 491], ['12', 520], ['11', 550], ['10', 579]];

const vText = (t, x, y, size) => (
  <text key={t} transform={`translate(${x} ${y}) rotate(-90)`} fontSize={size}>{t}</text>
);

function StairPlan() {
  return (
    <svg width="636" height="344" viewBox="232 206 636 344" fontFamily="Liberation Sans, sans-serif">
      <rect x="232" y="206" width="636" height="344" fill="#fff" />
      <g fill="none" stroke="#fc9c9c" strokeWidth="2">
        {RED_RISERS.map(x => <path key={x} d={`M${x + 0.5} 256V362`} strokeWidth={x < 330 ? 1.5 : 2} />)}
        <path d="M267 362H655V378M267 309H660A47 47 0 0 1 707 356V432" />
        <path d="M659 256L634 362M709 256L646 362M760 284L655 362M760 344L655 370" strokeWidth="1.500" />
        <path d="M281 295L267 309L281 323" stroke="#f77" strokeWidth="1.200" />
        <path d="M538.500 484V378H654M568 378V484M597 378V484M626.500 378V484M653.500 378V484M540 431.500H707" />
      </g>
      <g fill="none" stroke="#333">
        <g strokeDasharray="11 6">
          {DASHED_RISERS.map(x => <path key={x} d={`M${x + 0.5} 258V363`} />)}
          <path d="M349.500 257.500H600M349.500 257.500V363M350 310.500H548M350 363.500H526M583.500 258V310" />
          <path d="M378 258L350 310L378 363" />
        </g>
        <path d="M600 257.500H760M583.500 300V363M612.500 257V363M641.500 257V363M554.500 320V363" />
        <path d="M526 363L598 257M534 363L606 257M569 310L583 363M698 257L647 363M760 277L655 362" />
        <path d="M760 344L655 370" stroke="#6b2020" />
        <path d="M548 310.500H655C690 310 704 335 706 352L709 372V432H540" />
        <path d="M534 363.500H655.500V379H535.500V484M565.500 379V484M594.500 379V484M623.500 379V484M652.500 379V484" />
        <path d="M664 362h12M680 362h12M696 362h12M716 362h6" stroke="#bbb" />
        <path d="M652 368l4 4M656 368l-4 4" stroke="#b33" />
      </g>
      <circle cx="539" cy="431.500" r="5" fill="none" stroke="#f77" />
      <circle cx="535.500" cy="432.500" r="4" fill="#fff" stroke="#000" />

      <g fill="#999" stroke="#444">
        <rect x="257.500" y="255.500" width="8" height="98" />
        <path d="M257.500 453V493.500H370V484.500H266V453z" />
      </g>
      <path d="M257 206h27v22.500h476V206h27v143h-26.500v-94H257zM517 484h243.500v-36H787v102h-26.500v-38H517zM370 484h49v28h-22v21h-27z" />
      <g fill="#fff" stroke="#555">
        <rect x="787.500" y="205.500" width="9" height="345" fill="#ececec" />
        <rect x="761" y="349.500" width="35" height="98.500" />
        <path d="M256.500 352h10v4h-2v3h-8zM256.500 447.500h7v2h3v5h-10zM419 483.500h6v25h-3v4h-3zM518 483.500h-6v25h3v4h3zM369 532.500h29v5.500h-26v-3h-3z" />
      </g>
      <g fill="none" stroke="#666">
        <path d="M264 357A95 92 0 0 1 359.500 449.500H262M421.500 512V550M516 512Q515 532 506 550M370 536Q343 537 320 550" />
        <path d="M762.500 349V448M788 355C740 353 700 385 697 443H790M790 357.500h6M790 440.500h6" />
        <path d="M814.500 206V550M560.500 550V513.500H758V550M590 513V550M619 513V550M669 513L656 550M730 513L703 550" />
        <path d="M584.500 513V550M613.500 513V550M664 513L652 550M724 513L697 550" strokeDasharray="3 3" />
      </g>
      <rect x="787" y="362" width="4" height="74" fill="#aaa" stroke="#444" />
      <path d="M785.500 355.500h6v7h-6zM785.500 435.500h6v7h-6z" fill="#fff" stroke="#444" />
      <g fill="none" stroke="#555">
        <path d="M843.500 247V493M833 255.500h21M833 484.500h21M838 250l11 11M838 479l11 11M838 389.500h8M827 352l3-2M827 386l3 3" />
      </g>
      <text x="395" y="305" fontSize="22">17 STG x 17,65 cm x 27,5 cm</text>
      {STEP_LABELS.map(([t, x]) => vText(t, x, 285, 21))}
      {vText('9', 608, 275, 21)}
      {vText('8', 637, 275, 21)}
      <text transform="translate(684 273) rotate(-66)" fontSize="21">7</text>
      <text transform="translate(747 283) rotate(-40)" fontSize="21">6</text>
      <text transform="translate(744 344) rotate(-8)" fontSize="21">5</text>
      {vText('1', 581, 480, 21)}
      {vText('2', 610, 480, 21)}
      {vText('3', 639, 480, 21)}
      {vText('4', 668, 480, 21)}
      {vText('2,04', 841, 388, 19)}
      {vText('22', 577, 534, 9)}
      {vText('21', 606, 534, 9)}
      {vText('20', 644, 534, 9)}
      {vText('19', 696, 534, 9)}
      <text x="738" y="543" fontSize="9">18</text>
    </svg>
  );
}

/* ---------- taskbars ---------- */
const tile = (bg, letter, page) => (
  <>
    <path d="M1 3l9-2v14l-9-2z" fill={bg} />
    <path d="M10 3h5v10h-5z" fill={page} stroke={bg} />
    <path d="M10 6h4M10 8.500h4M10 11h4" stroke={bg} />
    <text x="3" y="11" fontSize="8" fontWeight="700" fill="#fff">{letter}</text>
  </>
);

const APPS = {
  cortana: <circle cx="8" cy="8" r="4.500" fill="none" stroke="#eee" strokeWidth="1.500" />,
  taskview: <path d="M3 2v3h7V2M3 14v-3h7v3M3.500 6.500h6v3h-6zM13 2v7M13 11v3" fill="none" stroke="#ccc" />,
  box: <><path d="M0 1h16v14H0z" fill="#0f78d4" /><path d="M8 3l6 3-6 3-6-3zM2 7.500l4 2 2-1 2 1 4-2v3l-6 3-6-3z" fill="#fff" /></>,
  cross: <path d="M3 3l10 10M13 2L3 14" stroke="#d8121f" strokeWidth="2" />,
  sync: <path d="M2.500 7c1-5 7-6 10-3l1.500-2v5h-5M13.500 9c-1 5-7 6-10 3L2 14V9h5" fill="none" stroke="#3f97dc" strokeWidth="2" />,
  uparrow: <path d="M7 1.500L2 7h3c0 4 2 7 7 8-3-2-3-4-3-8h3z" fill="#1fd034" />,
  edge: <><circle cx="8" cy="8" r="7.500" fill="#1b85d1" /><path d="M1 8C2-1 15-1 15 7c0 4-6 4-6 1 0-3-5-4-8 0z" fill="#45cf91" /><path d="M5 8c0 5 4 7 8 5-5 4-12 1-12-5 1-2 4-2 4 0z" fill="#125ca8" /></>,
  chrome: <><circle cx="8" cy="8" r="7.500" fill="#f9c71c" /><path d="M8 8L1.500 4.300A7.500 7.500 0 0 1 14.800 5H8z" fill="#e33b2e" /><path d="M8 8L1.500 4.300A7.500 7.500 0 0 0 8 15.500l3.500-6.500z" fill="#2da94f" /><circle cx="8" cy="8" r="3.500" fill="#fff" /><circle cx="8" cy="8" r="2.700" fill="#4285f4" /></>,
  pc: <><path d="M1 3l12-1 1 8-10 2z" fill="#c9d7e2" /><path d="M4 4l8-1 1 6-7 1z" fill="#3a87c9" /><path d="M2 12l9-2 4 3-8 2z" fill="#e8dca8" /></>,
  sheets: <><path d="M1 4l8-2 2 7-8 2z" fill="#c9ccd0" /><path d="M6 3h9v8H6z" fill="#e4e7ea" /><path d="M7 8l2-3 2 3 2-2" fill="none" stroke="#7f98ac" /><path d="M7 12h6v2H7z" fill="#aaa" /></>,
  folder: <><path d="M1 3h5l1 1h8v10H1z" fill="#f6c544" /><path d="M1 6h14v8H1z" fill="#fbd968" /><path d="M4 14v-4h8v4h-2v-2H6v2z" fill="#3f8bd0" /></>,
  calc: <><path d="M3 0.500h10v15H3z" fill="#f2f2f2" /><path d="M4.500 3h7M5 6.500h1M7.500 6.500h1M10 6.500h1M5 9h1M7.500 9h1M10 9h1M5 11.500h1M7.500 11.500h1M10 11.500h1" stroke="#222" strokeWidth="1.500" /></>,
  search: <><path d="M3 2h13v9H3z" fill="#36a0e4" /><path d="M6 13h6v1H6z" fill="#8cc6ee" /><circle cx="6" cy="8" r="3" fill="#9bd3f5" stroke="#27648f" /><path d="M4 10l-3 4" stroke="#c78b4b" strokeWidth="2" /></>,
  flame: <><path d="M8 0c1 4 5 5 5 10 0 7-10 7-10 0 0-3 2-4 2-6 1 1 2 2 2 3 1-2 2-4 1-7z" fill="#f4691c" /><path d="M8 7c2 2 3 3 3 5 0 4-6 4-6 0 0-2 2-3 3-5z" fill="#fdd63c" /></>,
  excel: tile('#1f7244', 'X', '#e9f4ee'),
  word: tile('#2a5699', 'W', '#e9eff8'),
  ppt: tile('#d24625', 'P', '#fbeae6'),
  pub: tile('#077568', 'P', '#e3f3f1'),
  archicad: <><path d="M1 14C1 6 5 1 9.500 1 14 1 16 7 15 13c-1 2-3 1-4-2-1-2-3-2-4 0-1 3-3 5-6 3z" fill="#2f62cc" /><path d="M1.500 13.500C3 5 7 3 10 4c3 1 4.500 4 4.500 8" fill="none" stroke="#b5cdf6" strokeWidth="1.500" /></>,
  ps: <><rect x="1.500" y="1.500" width="13" height="13" rx="2" fill="#0b1e2b" stroke="#34a8dc" /><text x="3" y="11" fontSize="8" fontWeight="600" fill="#8cd6f8">Ps</text></>,
  pdf: <><rect x="1.500" y="1.500" width="13" height="13" fill="#2b0a0a" stroke="#c0201c" strokeWidth="1.500" /><path d="M4 12c3-2 5-6 4-8-2 0 0 5 5 6-3-1-6 0-9 2z" fill="none" stroke="#f0e0e0" /></>,
  photos: <><path d="M1 1h14v14H1z" fill="#fff" /><path d="M2 12l4-5 2 2 2-3 4 6z" fill="#111" /></>,
  up: <path d="M4 10l4-4 4 4" fill="none" stroke="#ddd" strokeWidth="1.200" />,
  battery: <><path d="M5 6h9v5H5z" fill="#ccc" /><path d="M2 4v3h3M4 4v3M3 7v4h3" fill="none" stroke="#ddd" /></>,
  wifi: <path d="M3 13C3 7 7 3 13 3M6 13c0-4 3-7 7-7M9 13c0-2 2-4 4-4" fill="none" stroke="#bbb" />,
  globe: <><circle cx="7" cy="8" r="5.500" fill="none" stroke="#ccc" /><path d="M1.500 8h11M7 2.500v11M3 5h8M3 11h5M4.500 4c-2 3-2 5 0 8M9.500 4c1 2 1 3 1 5" fill="none" stroke="#ccc" /><circle cx="12" cy="12" r="2.500" fill="#101010" stroke="#ccc" /></>,
  volume: <><path d="M2 6h2l4-3v10l-4-3H2z" fill="none" stroke="#ddd" /><path d="M10 6c1 1 1 3 0 4M12 4c2 2 2 6 0 8" fill="none" stroke="#888" /></>,
  ink: <path d="M3 9c3-5 6-4 4 0s-5 3-4 0M7 11l6-8 1 1-5 8zM10 12c3-1 3-4 1-4" fill="none" stroke="#ccc" />,
  keyboard: <><path d="M0.500 3.500h15v8h-15z" fill="none" stroke="#bbb" /><path d="M2 5.500h12M2 7.500h12M4 9.500h8" stroke="#aaa" strokeDasharray="1 1" /></>,
};

const AppIcon = ({ name, size = 16 }) => (
  <svg width={size} height={size} viewBox="0 0 16 16" aria-hidden="true">{APPS[name]}</svg>
);

const TaskBar = styled.footer`
  display: flex;
  flex: 0 0 ${props => props.$height}px;
  min-width: 0;
  background: #101010;
  color: #e2e2e2;
  font-size: 8px;
  .start {
    display: flex;
    flex: 0 0 32px;
    align-items: center;
    justify-content: center;
  }
  .cut {
    flex: 0 0 75px;
    background: #f3f3f3;
    color: #555;
    font-size: 10px;
    line-height: 24px;
    border-top: 1px solid #ddd;
  }
`;

const AppList = styled.div`
  display: flex;
  flex: 0 1 ${props => props.$width}px;
`;

const AppButton = styled.button`
  display: flex;
  flex: 1;
  align-items: center;
  justify-content: center;
  background: ${props => (props.$focus ? '#383838' : 'none')};
  border-top: 2px solid transparent;
  border-bottom: 2px solid ${props => (props.$open ? '#dc8b80' : 'transparent')};
`;

const Search = styled.label`
  display: flex;
  align-items: center;
  flex: 0 0 229px;
  gap: 7px;
  padding-left: 7px;
  background: #f2f2f2;
  color: #3f3f3f;
  input {
    flex: 1;
    font-size: 10px;
  }
  input::placeholder {
    color: #3f3f3f;
    opacity: 1;
  }
`;

const Tray = styled.div`
  display: flex;
  align-items: center;
  margin-left: auto;
  padding-right: ${props => props.$end}px;
  gap: ${props => props.$gap}px;
  svg {
    flex: none;
  }
  .clock {
    width: ${props => props.$font * 6}px;
    text-align: center;
    font-size: ${props => props.$font}px;
    line-height: ${props => props.$font + 4}px;
  }
`;

const Notice = styled.button`
  display: flex;
  position: relative;
  span {
    position: absolute;
    right: -4px;
    bottom: -4px;
    width: 10px;
    height: 10px;
    border-radius: 5px;
    border: 1px solid #999;
    background: #2c2c2c;
    font-size: 7px;
    line-height: 8px;
    text-align: center;
  }
`;

function NoticeIcon({ count }) {
  return (
    <Notice aria-label="Benachrichtigungen">
      <svg width="12" height="12" viewBox="0 0 12 12">
        <path d="M1 0h10v9H8l-3 3V9H1z" fill="#f1f1f1" />
        <path d="M3 3h6M3 5.500h6" stroke="#333" />
      </svg>
      <span>{count}</span>
    </Notice>
  );
}

// "_" marks a running app, "!" the one in front
const renderApps = (list, size) =>
  list.split(' ').map((a, i) => {
    const name = a.replace(/[_!]/g, '');
    return (
      <AppButton key={i} aria-label={name} $open={/[_!]/.test(a)} $focus={a.includes('!')}>
        <AppIcon name={name} size={size} />
      </AppButton>
    );
  });

/* ---------- option bar ---------- */
const OptionBar = styled.div`
  display: flex;
  flex: 0 0 13px;
  background: #efefef;
  ${tinyFont}
  .zoom {
    display: flex;
    flex: 0 0 49px;
    align-items: center;
    gap: 2px;
    padding-left: 1px;
  }
`;

const Option = styled.button`
  display: flex;
  flex: 1 1 0;
  align-items: center;
  padding: 0 4px 0 2px;
  border-left: 1px solid #bdbdbd;
  svg {
    flex: none;
  }
  span:first-of-type {
    flex: 1;
    white-space: nowrap;
  }
`;

const OPTIONS = [
  ['zoomFit', '1013%'], ['orient', '0,00°'], ['scale', '1:100'], ['layers', '04 Beispiel Gr Geneh...'],
  ['model', 'Komplettes Modell'], ['pen', '02 S/W 1:100/200'], ['monitor', '04 Beispiel Genehmig...'],
  ['override', 'Keine Überschreibun...'], ['reno', '00 Reiner Neubau'], ['dimStd', 'DIN 1356 - Rundung ....'],
];

const CoordBar = styled.div`
  display: flex;
  flex: 0 0 24px;
  align-items: center;
  padding-left: 2px;
  background: #f0f0f0;
  border-top: 1px solid #e2e2e2;
  ${tinyFont}
  .half {
    width: 60px;
    padding-left: 2px;
    line-height: 10px;
    input {
      display: block;
      width: 50px;
      color: #777;
    }
  }
`;

const Sep = styled.div`
  flex: none;
  width: 1px;
  height: 18px;
  margin: 0 ${props => props.$space || 2}px;
  background: #b5b5b5;
`;

const Delta = styled.button`
  flex: 0 0 10px;
  height: 19px;
  margin-left: 2px;
  border: 1px solid #4a8ab8;
  background: #c5e4fa;
  font-weight: 700;
`;

const Fields = styled.div`
  display: grid;
  grid-template-columns: 16px 1fr;
  width: ${props => props.$width}px;
  padding-left: 4px;
  line-height: 10px;
  label {
    text-align: right;
    padding-right: 3px;
    font-weight: 700;
  }
  input {
    width: 100%;
    height: 10px;
    padding-left: 2px;
    background: #fff;
  }
  .wide {
    grid-column: 1 / 3;
    white-space: nowrap;
  }
`;

const Small = styled.button`
  display: flex;
  flex: 0 0 8px;
  align-items: center;
  justify-content: center;
  height: ${props => props.$height || 8}px;
  background: #dedede;
  border: 1px solid #c4c4c4;
`;

const Action = styled.button`
  flex: 0 0 45px;
  height: 14px;
  margin-right: 2px;
  background: #cfcfcf;
  border: 1px solid #c4c4c4;
  color: #8d8d8d;
`;

const slots = list => list.split(' ').map((t, i) => <Tool key={i} spec={t} width={20} height={20} />);

function Coordinates() {
  return (
    <CoordBar>
      <Sep $space={1} />
      {slots('cross# gridSkew# gridAxis* gridTurn snapPoint* gridDots gridLines')}
      <Sep $space={3} />
      <Delta>Δ</Delta>
      <Fields $width={82}>
        <label htmlFor="cx">lx:</label><input id="cx" defaultValue="18,685" />
        <label htmlFor="cy">ly:</label><input id="cy" defaultValue="-18,113" />
      </Fields>
      <Sep />
      <Delta>Δ</Delta>
      <Fields $width={81}>
        <label htmlFor="cr">lr:</label><input id="cr" defaultValue="26,023" />
        <label htmlFor="cw">w:</label><input id="cw" defaultValue="315,89°" />
      </Fields>
      <Sep />
      {slots('slope# surf- surf2- surf3- surf4-')}
      <Fields $width={72}>
        <label htmlFor="cz">lz:</label><input id="cz" defaultValue="0,000" />
        <span className="wide">zu Projekturspr...</span>
      </Fields>
      <Small aria-label="Ursprung"><Chevron $right $small /></Small>
      <Sep $space={9} />
      {slots('square# dashLine dashCross eraser')}
      <Sep $space={3} />
      {slots('perp parallel bisect offset offset2 tangent gridPlane- curveL# curveR- arcR- group overlap2* wand#')}
      <Sep />
      {slots('snapMid* snapCheck*')}
      <Small aria-label="Fangpunkte" $height={20}><Chevron $right $small /></Small>
      <div className="half">
        <label htmlFor="half">Hälfte</label>
        <input id="half" defaultValue="2" />
      </div>
      <Small aria-label="Teilung"><Chevron $right $small /></Small>
      <Sep $space={4} />
      <Action>OK</Action>
      <Action>Abbrechen</Action>
    </CoordBar>
  );
}

function ForumShot() {
  return (
    <Shot>
      <Page>
        <Forum>
          <ForumHead>
            <div className="author" />
            <div className="message">Nachricht</div>
          </ForumHead>
          <PostHead>
            <b className="author">chmed</b>
            <span><b>Betreff des Beitrags:</b> Treppe Spezial</span>
            <span className="date">
              <svg width="11" height="11" viewBox="0 0 11 11">
                <path d="M2 1h4.500L9 3.500V10H2zM6 1v3h3" fill="none" stroke="#222" />
              </svg>
              <span><b>Verfasst:</b> 3. Mär 2021, 17:59</span>
            </span>
          </PostHead>
          <Post>
            <Author>
              <button>INE</button>
              <div>ran</div>
              <div className="joined">Apr 2004,</div>
              <div className="place">ch</div>
            </Author>
            <Message>
              <p>Hallo Leute,</p>
              <p>ich sollte so eine Treppe im Projekt haben:</p>
              <StairPlan />
              <p className="text">
                Abgesehen davon, dass es mit der Wendelung hapert, weil es weder eine symmetrische Eckstufe noch eine Stufenvorderkante, die ins<br />
                Eck läuft, geben kann, scheint das ganze "gar nicht" zu gehen, weil sich der Antrittspunkt der ersten gewendelten Stufe "innerhalb der<br />
                Laufbreite des nächsten Lauf befinden muss.
              </p>
            </Message>
          </Post>
        </Forum>
        <ScrollBar>
          <div className="up" />
          <div className="thumb" />
          <div className="down" />
        </ScrollBar>
      </Page>
      <TaskBar $height={25}>
        <div className="cut">en</div>
        <AppList $width={658}>
          {renderApps('cortana taskview box cross sync uparrow edge chrome! pc sheets folder_ calc search_ flame excel word ppt pub archicad ps pdf photos_', 15)}
        </AppList>
        <Tray $end={22} $gap={2} $font={7}>
          {['up', 'flame', 'battery', 'wifi', 'volume', 'ink', 'keyboard'].map(t => <AppIcon key={t} name={t} size={13} />)}
          <span>DEU</span>
          <div className="clock">13:31<br />04.03.2021</div>
          <NoticeIcon count={1} />
        </Tray>
      </TaskBar>
    </Shot>
  );
}

function App() {
  return (
    <>
      <GlobalStyle />
      <Window>
        <TitleBar>
          <svg width="11" height="11" viewBox="0 0 16 16">
            <circle cx="8" cy="8" r="8" fill="#e9eefa" />
            {APPS.archicad}
          </svg>
          <span className="title">Ohne Titel - ARCHICAD 24</span>
          <div className="controls">
            <button aria-label="Minimieren"><svg width="9" height="9"><path d="M1 5.500h7" stroke="#fbe9e4" /></svg></button>
            <button aria-label="Verkleinern"><svg width="9" height="9"><path d="M1.500 3.500h5v4h-5zM3 3.500v-2h5v5H7" fill="none" stroke="#fbe9e4" /></svg></button>
            <button aria-label="Schließen"><svg width="9" height="9"><path d="M1 1l7 7M8 1L1 8" stroke="#fbe9e4" /></svg></button>
          </div>
        </TitleBar>
        <MenuBar>
          {MENUS.map(m => <button key={m}>{m}</button>)}
          <div className="mdi">
            <svg width="6" height="6"><path d="M0 5h5" stroke="#222" /></svg>
            <svg width="6" height="6"><path d="M1 2.500h3v3H1zM2 1h4v3" fill="none" stroke="#222" /></svg>
            <svg width="6" height="6"><path d="M1 1l4 4M5 1L1 5" stroke="#222" /></svg>
          </div>
        </MenuBar>
        <ToolBar>{TOOLBAR.map((t, i) => <Tool key={i} spec={t} />)}</ToolBar>
        <Body>
          <Toolbox />
          <Work>
            <TabBar>
              <Tool spec="overview#" width={17} height={16} />
              <Tab $active><Icon name="folderBlue" size={14} />0. EG [0. EG]<span className="close">×</span></Tab>
              <Tab>
                <svg width="14" height="14" viewBox="0 0 16 16" fill="none">
                  <path d={TOWER} stroke="#434d56" />
                  <circle cx="13" cy="3" r="2.500" fill="#e8452f" />
                </svg>
                [Aktions-Center]
              </Tab>
              <Tab><Icon name="box2" size={14} />[3D / Alle]</Tab>
              <div className="end"><Icon name="elevBlue" /><Icon name="caret" size={11} /></div>
            </TabBar>
            <Canvas>
              <ForumShot />
            </Canvas>
            <OptionBar>
              <div className="zoom">
                <Tool spec="undo" size={13} width={13} height={13} />
                <Tool spec="redo-" size={13} width={13} height={13} />
                <Tool spec="zoomIn" size={13} width={13} height={13} />
              </div>
              {OPTIONS.map(([icon, text]) => (
                <Option key={text}><Icon name={icon} size={13} /><span>{text}</span><Chevron $right $small /></Option>
              ))}
            </OptionBar>
          </Work>
          <FloatingPalette />
        </Body>
        <Coordinates />
        <TaskBar $height={27}>
          <button className="start" aria-label="Start">
            <svg width="12" height="12" viewBox="0 0 12 12">
              <path d="M0 2l5-1v4.500H0zM6 1l6-1v5.500H6zM0 6.500h5V11l-5-1zM6 6.500h6V12l-6-1z" fill="#f5f5f5" />
            </svg>
          </button>
          <Search>
            <svg width="12" height="12" viewBox="0 0 12 12" fill="none" stroke="#333">
              <circle cx="7.500" cy="4.500" r="3.500" />
              <path d="M5 7L1 11" />
            </svg>
            <input aria-label="Suche" placeholder="Zur Suche Text hier eingeben" />
          </Search>
          <AppList $width={683}>
            {renderApps('cortana taskview box cross sync uparrow edge chrome_ pc sheets folder_ calc search_ flame excel word ppt pub archicad! ps pdf')}
          </AppList>
          <Tray $end={18} $gap={3} $font={8}>
            {['up', 'battery', 'globe', 'volume', 'ink', 'keyboard'].map(t => <AppIcon key={t} name={t} size={15} />)}
            <span>DEU</span>
            <div className="clock">20:50<br />05.03.2021</div>
            <NoticeIcon count={3} />
          </Tray>
        </TaskBar>
      </Window>
    </>
  );
}

export default App;
